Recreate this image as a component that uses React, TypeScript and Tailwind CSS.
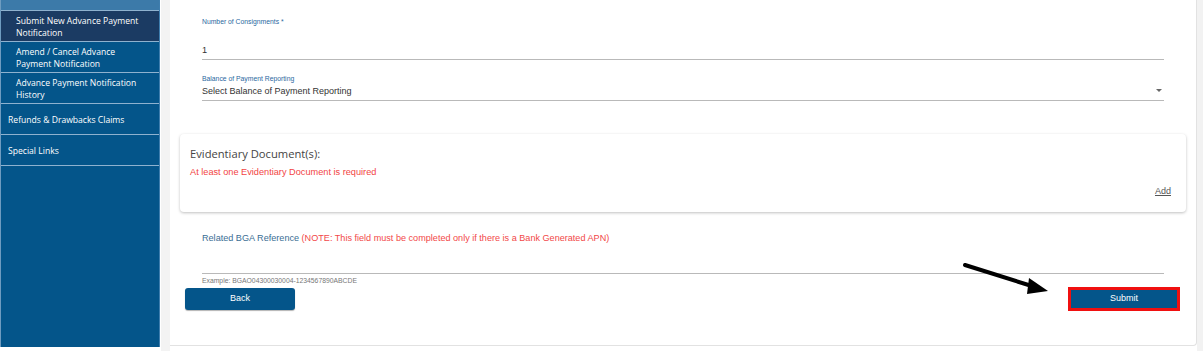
import React from "react";

const navItems = [
  { label: "Submit New Advance Payment Notification", active: true },
  { label: "Amend / Cancel Advance Payment Notification" },
  { label: "Advance Payment Notification History" },
];

export default function App() {
  return (
    <div className="relative w-[1203px] h-[351px] flex bg-white overflow-hidden font-['Liberation_Sans',Arial,sans-serif]">
      {/* Sidebar */}
      <aside className="w-[160px] h-[347px] shrink-0 bg-[#04558a] border-l border-[#6f9cc0] border-r border-r-[#3f7eae] flex flex-col font-['Open_Sans','Noto_Sans',sans-serif] text-white">
        <div className="h-[11px] bg-[#3c7aa9] border-b border-[#8fb2cf]" />
        {navItems.map((it) => (
          <div
            key={it.label}
            className={`h-[31px] pl-[15px] pr-[8px] pt-[1px] flex items-center border-b border-[#8fb2cf] text-[8.6px] leading-[12px] ${
              it.active ? "bg-[#1b3b63]" : ""
            }`}
          >
            <span className="w-[130px]">{it.label}</span>
          </div>
        ))}
        <div className="h-[31px] pl-[7px] pt-[2px] flex items-center border-b border-[#8fb2cf] text-[8.6px]">
          Refunds &amp; Drawbacks Claims
        </div>
        <div className="h-[31px] pl-[7px] pt-[2px] flex items-center border-b border-[#8fb2cf] text-[8.6px]">
          Special Links
        </div>
      </aside>

      {/* gutter */}
      <div className="w-[10px] shrink-0 flex">
        <div className="w-[1px] bg-white" />
        <div className="flex-1 bg-[#f3f3f3]" />
      </div>

      {/* Content panel */}
      <main className="w-[1027px] h-[346px] shrink-0 bg-white border-r border-b border-[#e2e2e2] rounded-br-[4px] px-[10px]">
        <div className="px-[22px] pt-[17px]">
          <div className="text-[6.8px] leading-[10px] text-[#2a68a0]">Number of Consignments *</div>
          <div className="h-[33px] flex items-end pb-[3px] border-b border-[#b9b9b9] text-[9.2px] leading-[12px] text-[#333]">
            1
          </div>
          <div className="mt-[14px] text-[6.8px] leading-[10px] text-[#2a68a0]">Balance of Payment Reporting</div>
          <div className="h-[17px] flex items-end justify-between pb-[3px] border-b border-[#b9b9b9] text-[9px] leading-[12px] text-[#333]">
            <span>Select Balance of Payment Reporting</span>
            <svg width="8" height="5" viewBox="0 0 8 5" className="mr-[1px] mb-[4px]">
              <path d="M1 1 L7 1 L4 4 Z" fill="#666" />
            </svg>
          </div>
        </div>

        {/* Evidentiary card */}
        <div className="mt-[33px] h-[78px] bg-white rounded-[4px] shadow-[0_1px_3px_rgba(0,0,0,0.25)] pl-[10px] pr-[15px] pt-[13px]">
          <div className="font-['Open_Sans','Noto_Sans',sans-serif] text-[11.2px] leading-[14px] text-[#444]">
            Evidentiary Document(s):
          </div>
          <div className="mt-[6px] text-[9.2px] leading-[11px] text-[#f24444]">
            At least one Evidentiary Document is required
          </div>
          <div className="mt-[8px] flex justify-end">
            <span className="text-[9px] leading-[11px] text-[#555] underline">Add</span>
          </div>
        </div>

        <div className="px-[22px] pt-[21px]">
          <div className="text-[9.1px] leading-[11px]">
            <span className="text-[#3a6d94]">Related BGA Reference </span>
            <span className="text-[#f24848]">(NOTE: This field must be completed only if there is a Bank Generated APN)</span>
          </div>
          <div className="h-[30px] border-b border-[#b9b9b9]" />
          <div className="mt-[3px] text-[6.8px] leading-[8px] text-[#777]">Example: BGAO04300030004-1234567890ABCDE</div>
        </div>

        <div className="mt-[2px] flex justify-between items-center pl-[5px] pr-[6px]">
          <div className="w-[110px] h-[22px] rounded-[3px] bg-[#04558a] shadow-[0_1px_1px_rgba(0,0,0,0.3)] flex items-center justify-center text-white text-[9px]">
            Back
          </div>
          <div className="w-[112px] h-[24px] border-[3px] border-[#f01010] bg-[#04558a] flex items-center justify-center text-white text-[9px]">
            Submit
          </div>
        </div>
      </main>

      <div className="flex-1 bg-[#f2f2f2]" />

      {/* annotation arrow */}
      <svg className="absolute left-0 top-0 pointer-events-none" width="1203" height="351">
        <line x1="965" y1="265" x2="1035" y2="287" stroke="#000" strokeWidth="4" strokeLinecap="round" />
        <polygon points="1048,291 1029,278 1027,294" fill="#000" />
      </svg>
    </div>
  );
}
